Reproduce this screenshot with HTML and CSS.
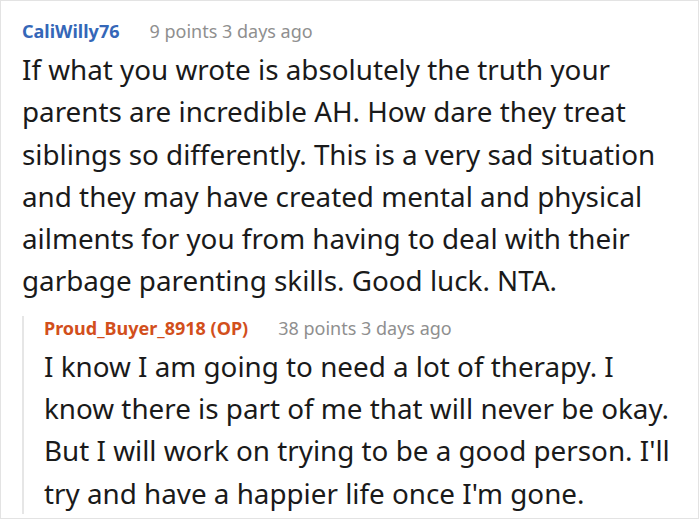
FILE: index.html
```html
<!DOCTYPE html>
<html>
<head>
<meta charset="utf-8">
<link rel="stylesheet" href="styles.css">
</head>
<body>
<div class="frame">
  <div class="comment">
    <div class="meta"><span class="user">CaliWilly76</span><span class="info">9 points 3 days ago</span></div>
    <p class="body">If what you wrote is absolutely the truth your parents are incredible AH. How dare they treat siblings so differently. This is a very sad situation and they may have created mental and physical ailments for you from having to deal with their garbage parenting skills. Good luck. NTA.</p>
    <div class="reply">
      <div class="meta"><span class="user op">Proud_Buyer_8918 (OP)</span><span class="info">38 points 3 days ago</span></div>
      <p class="body">I know I am going to need a lot of therapy. I know there is part of me that will never be okay. But I will work on trying to be a good person. I'll try and have a happier life once I'm gone.</p>
    </div>
  </div>
</div>
</body>
</html>
```
FILE: styles.css
```css
html, body { margin: 0; padding: 0; background: #fff; }
.frame {
  width: 697px;
  height: 517px;
  border: 1px solid #e3e3e3;
  overflow: hidden;
  font-family: "Noto Sans", "Open Sans", sans-serif;
}
.comment { padding: 18px 19px 0 21px; }
.meta { font-size: 18px; line-height: 24px; display: flex; gap: 30px; }
.user { font-weight: 700; color: #3567b8; }
.user.op { color: #d24f1c; }
.info { color: #8f8f8f; }
.body {
  margin: 5px 0 0;
  font-size: 27.8px;
  line-height: 42.3px;
  color: #1a1a1a;
}
.reply {
  margin-top: 24px;
  border-left: 2px solid #e6e6e6;
  padding-left: 20px;
}
.reply .meta { margin-top: -10px; }
.reply .body { margin-bottom: -12px; }
```
